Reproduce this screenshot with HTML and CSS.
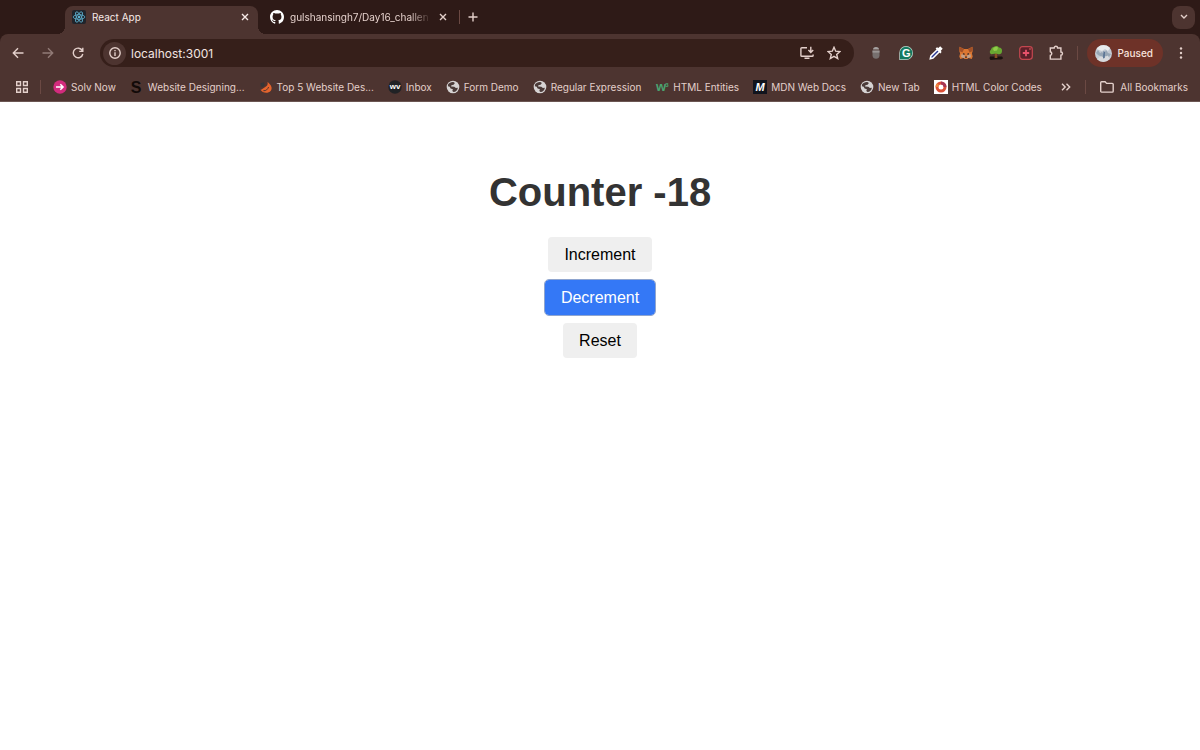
FILE: index.html
```html
<!DOCTYPE html>
<html lang="en">
<head>
  <meta charset="utf-8">
  <title>React App</title>
  <link rel="stylesheet" href="styles.css">
</head>
<body>
  <!-- globe used by bookmarks without a favicon -->
  <svg class="defs" width="0" height="0">
    <symbol id="globe" viewBox="0 0 14 14">
      <circle cx="7" cy="7" r="6.3" fill="#d6d3d3"/>
      <path d="M2 4.600C3.200 2.800 5 1.900 7.400 2.100L8.900 3 7.600 4.700l-2.200.5-.3 1.300 3.200.3 1.600 1.300 2-.4c-.4 2.400-2 4.100-4.400 4.400L6.300 11l.6-1.700L4.600 8.400 3.700 6.800 1.900 6.200z" fill="#4b3b39"/>
    </symbol>
  </svg>

  <header class="browser">
    <div class="tabs">
      <div class="tab active">
        <svg class="favicon" viewBox="0 0 14 14">
          <rect width="14" height="14" rx="2" fill="#20242b"/>
          <g fill="none" stroke="#61b5d4" stroke-width=".8">
            <ellipse cx="7" cy="7" rx="5.800" ry="2.300"/>
            <ellipse cx="7" cy="7" rx="5.800" ry="2.300" transform="rotate(60 7 7)"/>
            <ellipse cx="7" cy="7" rx="5.800" ry="2.300" transform="rotate(120 7 7)"/>
          </g>
          <circle cx="7" cy="7" r="1.200" fill="#61b5d4"/>
        </svg>
        <span class="tab-title">React App</span>
        <button class="close" aria-label="Close tab">
          <svg width="8" height="8" viewBox="0 0 8 8"><path d="M1 1l6 6M7 1L1 7"/></svg>
        </button>
      </div>
      <div class="tab">
        <svg class="favicon" viewBox="0 0 16 16" fill="#fff">
          <path d="M8 0C3.580 0 0 3.580 0 8c0 3.540 2.290 6.530 5.470 7.590.4.070.55-.17.55-.38 0-.19-.01-.82-.01-1.490-2.010.37-2.530-.49-2.690-.94-.09-.23-.48-.94-.82-1.130-.28-.15-.68-.52-.01-.53.63-.01 1.080.58 1.230.82.72 1.210 1.870.87 2.330.66.07-.52.28-.87.51-1.070-1.780-.2-3.640-.89-3.640-3.950 0-.87.31-1.590.82-2.150-.08-.2-.36-1.020.08-2.120 0 0 .67-.21 2.200.82.64-.18 1.320-.27 2-.27s1.360.09 2 .27c1.530-1.040 2.200-.82 2.200-.82.44 1.100.16 1.920.08 2.120.51.56.82 1.270.82 2.150 0 3.070-1.870 3.750-3.650 3.950.29.25.54.73.54 1.480 0 1.070-.01 1.930-.01 2.200 0 .21.15.46.55.38A8.010 8.010 0 0 0 16 8c0-4.420-3.580-8-8-8z"/>
        </svg>
        <span class="tab-title fade">gulshansingh7/Day16_challen</span>
        <button class="close" aria-label="Close tab">
          <svg width="8" height="8" viewBox="0 0 8 8"><path d="M1 1l6 6M7 1L1 7"/></svg>
        </button>
      </div>
      <span class="divider"></span>
      <button class="new-tab" aria-label="New tab">
        <svg width="10" height="10" viewBox="0 0 10 10"><path d="M5 .5v9M.5 5h9"/></svg>
      </button>
      <button class="tab-search" aria-label="Search tabs">
        <svg width="8" height="6" viewBox="0 0 8 6"><path d="M1 1l3 3 3-3"/></svg>
      </button>
    </div>

    <div class="toolbar">
      <div class="nav">
        <button aria-label="Back"><svg width="12" height="12" viewBox="0 0 12 12"><path d="M11.500 6H1.500M6 1.300L1.300 6 6 10.700"/></svg></button>
        <button class="dim" aria-label="Forward" disabled><svg width="12" height="12" viewBox="0 0 12 12"><path d="M.5 6h10M6 1.300L10.700 6 6 10.700"/></svg></button>
        <button aria-label="Reload"><svg width="12" height="12" viewBox="0 0 12 12"><path d="M10.300 3.600A4.800 4.800 0 1 0 10.800 7M10.800.8v3.600H7.200"/></svg></button>
      </div>

      <div class="address">
        <button class="site-info" aria-label="Site information">
          <svg width="12" height="12" viewBox="0 0 12 12"><circle cx="6" cy="6" r="5.200"/><path d="M6 5.300V9M6 3v1.300"/></svg>
        </button>
        <input type="text" aria-label="Address" value="localhost:3001">
        <button aria-label="Install app">
          <svg width="14" height="14" viewBox="0 0 14 14"><path d="M7 1.700H1.800a.9.900 0 0 0-.9.900v6.800c0 .5.400.9.900.9h10.400c.5 0 .9-.4.900-.9V8.400M4.500 12.300h5M10.800.7v5.600M8.400 4l2.400 2.400L13.200 4"/></svg>
        </button>
        <button aria-label="Bookmark this page">
          <svg width="14" height="14" viewBox="0 0 14 14"><path d="M7 1.300l1.700 3.900 4.200.4-3.200 2.800 1 4.100L7 10.300l-3.700 2.200 1-4.100L1.100 5.600l4.200-.4z"/></svg>
        </button>
      </div>

      <div class="extensions">
        <button aria-label="Extension">
          <svg class="ext" viewBox="0 0 16 16">
            <path d="M5 4.600a3 2.600 0 0 1 6 0z" fill="#a7a3a2"/>
            <path d="M4.500 5.600h7v4.600c0 2.300-1.500 3.600-3.500 3.600s-3.500-1.300-3.500-3.600z" fill="#77706f"/>
            <path d="M4.500 5.600h7v2h-7z" fill="#9b9594"/>
          </svg>
        </button>
        <button aria-label="Grammarly">
          <svg class="ext" viewBox="0 0 16 16">
            <path d="M8 1a7 7 0 1 1 0 14H1.300V8A6.800 6.800 0 0 1 8 1z" fill="#bcd8ce"/>
            <path d="M8 1.700a6.300 6.300 0 1 1 0 12.600H2V8a6.200 6.200 0 0 1 6-6.300z" fill="#167a61"/>
            <text class="glyph" x="8.200" y="12" font-size="11" fill="#fff">G</text>
          </svg>
        </button>
        <button aria-label="Color picker">
          <svg class="ext" viewBox="0 0 16 16">
            <path d="M2.300 13.700l.6-2.700 6.800-6.800 2.100 2.100L5 13.100z" fill="#2c3a94" stroke="#fff" stroke-width="1.500"/>
            <path d="M7.600 3.600l1.400-1.300 1.300.8 1.900-1.800 2.500 2.500-1.900 2 .8 1.200-1.300 1.400z" fill="#fff"/>
          </svg>
        </button>
        <button aria-label="MetaMask">
          <svg class="ext" viewBox="0 0 16 16">
            <path d="M1.500 1.800L6 4h4l4.500-2.200.2 4.300-.8 2.500.8 3-1 2.300-3.200-.8-1.200 1H6.700l-1.200-1-3.200.8-1-2.300.8-3-.8-2.500z" fill="#db7732"/>
            <path d="M1.500 1.800L6 4 4.400 7.500 1.300 6.100zM14.500 1.800L10 4l1.600 3.500 3.100-1.400z" fill="#a45127"/>
            <path d="M3.500 9l3 1 .6 2.700-1.600.4-2.400-1zM12.500 9l-3 1-.6 2.700 1.600.4 2.400-1z" fill="#c1a18b"/>
            <path d="M5 8.600l1.600.8M11 8.600l-1.600.8M7 12.200h2" stroke="#40302d" stroke-width="1.300"/>
          </svg>
        </button>
        <button aria-label="Tree extension">
          <svg class="ext" viewBox="0 0 16 16">
            <path d="M2 11.500h12l1.200 1.800-2 1.200H8L2.500 15l-1-1.800z" fill="#1b1310"/>
            <path d="M7 7h2l.4 6H6.600z" fill="#875021"/>
            <path d="M3.300 9.300A2.500 2.500 0 0 1 2.800 5 4 4 0 0 1 6 1.800a3.800 3.800 0 0 1 5 .7A3.300 3.300 0 0 1 14 6c0 2.400-1.700 3.600-3.500 3.200L8 8.500z" fill="#68a832"/>
            <path d="M5 4a3 3 0 0 1 5-1.300L9 5.500 6 6z" fill="#91cb4a"/>
          </svg>
        </button>
        <button aria-label="Extension">
          <svg class="ext" viewBox="0 0 16 16">
            <rect x="1.700" y="1.700" width="12.600" height="12.600" rx="2.700" fill="#5c2029" stroke="#c2474f" stroke-width="1.200"/>
            <path d="M8 4.800v6.400M4.800 8h6.400" stroke="#e8526b" stroke-width="1.800"/>
            <circle cx="12" cy="4" r=".8" fill="#e76b62"/>
          </svg>
        </button>
        <button aria-label="Extensions">
          <svg class="ext line" viewBox="0 0 16 16"><path d="M2.300 3h3.900a1.700 1.700 0 0 1 3.400 0h3.300v4a1.600 1.600 0 0 1 0 3.200v3.900H2.300v-3.700a1.900 1.900 0 0 0 0-3.700z"/></svg>
        </button>
      </div>
      <span class="divider"></span>
      <button class="profile">
        <svg width="17" height="17" viewBox="0 0 17 17">
          <circle cx="8.500" cy="8.500" r="8.500" fill="#c3cad3"/>
          <path d="M1.500 4A8.500 8.500 0 0 1 15 3l-2 3-3-2-3 2-3-1z" fill="#e8eaec"/>
          <path d="M1 8l2-3 2 3 2-1 2 2 2-4 2 3 3 1-2 3-4-1-3 1-4-2z" fill="#97a6b5"/>
          <path d="M2 14.200l4-3 3 1.300 4-2 1.500 3.400a8.500 8.500 0 0 1-12.500.3z" fill="#d8dadd"/>
          <path d="M8.500 6l1.500 1-.3 6-1.700.5z" fill="#546f91"/>
        </svg>
        Paused
      </button>
      <button class="menu" aria-label="Menu">
        <svg width="4" height="14" viewBox="0 0 4 14"><circle cx="2" cy="2.500" r="1.200"/><circle cx="2" cy="7" r="1.200"/><circle cx="2" cy="11.500" r="1.200"/></svg>
      </button>
    </div>

    <nav class="bookmarks">
      <button class="apps" aria-label="Apps">
        <svg width="12" height="12" viewBox="0 0 12 12"><path d="M.7.700h3.800v3.800H.7zM7.500.7h3.800v3.800H7.500zM.7 7.500h3.800v3.800H.7zM7.500 7.500h3.800v3.800H7.500z"/></svg>
      </button>
      <span class="divider"></span>
      <div class="bookmark-list">
        <a href="#"><svg class="favicon" viewBox="0 0 14 14"><circle cx="7" cy="7" r="6.700" fill="#d22b7d"/><path d="M3 7h7M7.300 4.200L10.100 7l-2.800 2.800" fill="none" stroke="#fff" stroke-width="1.500"/></svg>Solv Now</a>
        <a href="#"><svg class="favicon" viewBox="0 0 14 14"><text class="glyph" x="6" y="12.500" font-size="16" fill="#120a08">S</text></svg>Website Designing...</a>
        <a href="#"><svg class="favicon" viewBox="0 0 14 14"><path d="M8.500 2c.7 2.700-.4 4-2.600 5.300C4.300 8.400 3 9.500 1.500 9.800c2 3.600 7.700 4.100 10.300 1 2-2.900.4-5.800-3.300-8.800z" fill="#e4642d"/><path d="M1.500 3.300l3.500-1 .6 2.700-1.500 2-2.200-.4z" fill="#343638"/><path d="M4.400 10.700c2.700.3 4.200-1.300 5.200-3.700" fill="none" stroke="#4d3430"/></svg>Top 5 Website Des...</a>
        <a href="#"><svg class="favicon" viewBox="0 0 14 14"><circle cx="7" cy="7" r="6.700" fill="#202225"/><text class="glyph" x="7" y="9.400" font-size="8" fill="#fff">wv</text></svg>Inbox</a>
        <a href="#"><svg class="favicon"><use href="#globe"/></svg>Form Demo</a>
        <a href="#"><svg class="favicon"><use href="#globe"/></svg>Regular Expression</a>
        <a href="#"><svg class="favicon" viewBox="0 0 14 14"><text class="glyph" x="6" y="11" font-size="13" fill="#4aa470">w</text><text class="glyph" x="12" y="7" font-size="6" fill="#4aa470">3</text></svg>HTML Entities</a>
        <a href="#"><svg class="favicon" viewBox="0 0 14 14"><rect width="14" height="14" fill="#11141d"/><text class="glyph" x="7" y="11" font-size="11" font-style="italic" fill="#fff">M</text></svg>MDN Web Docs</a>
        <a href="#"><svg class="favicon"><use href="#globe"/></svg>New Tab</a>
        <a href="#"><svg class="favicon" viewBox="0 0 14 14"><rect width="14" height="14" fill="#fff"/><circle cx="7" cy="7" r="4" fill="none" stroke="#dc5037" stroke-width="3"/><path d="M7 3a4 4 0 0 1 4 4" fill="none" stroke="#a73755" stroke-width="3"/><path d="M3 7a4 4 0 0 1 1.200-2.800" fill="none" stroke="#ee8740" stroke-width="3"/></svg>HTML Color Codes</a>
      </div>
      <button class="more" aria-label="More bookmarks">
        <svg width="10" height="8" viewBox="0 0 10 8"><path d="M1 .8L4.200 4 1 7.200M5.500.8L8.700 4 5.500 7.200"/></svg>
      </button>
      <span class="divider"></span>
      <a href="#" class="all"><svg width="14" height="12" viewBox="0 0 14 12"><path d="M.7 10.200V1.700c0-.5.400-.9.900-.9h3.500l1.500 1.600h5.600c.6 0 1 .4 1 .9v6.900c0 .5-.4.900-.9.900H1.600a.9.900 0 0 1-.9-.9z"/></svg>All Bookmarks</a>
    </nav>
  </header>

  <main class="counter">
    <h1>Counter <span id="count">-18</span></h1>
    <button onclick="setCount(count + 1)">Increment</button>
    <button class="pressed" onclick="setCount(count - 1)">Decrement</button>
    <button onclick="setCount(0)">Reset</button>
  </main>

  <script>
    let count = -18;

    function setCount(value) {
      count = value;
      document.getElementById("count").textContent = count;
    }
  </script>
</body>
</html>
```

FILE: styles.css
```css
* {
  box-sizing: border-box;
}
body {
  margin: 0;
  background-color: #fff;
  font-family: "Liberation Sans", Arial, sans-serif;
}
.defs {
  position: absolute;
}

/* browser frame */
.browser {
  background-color: #2e1a17;
  color: #e4d0cb;
  font-family: Inter, sans-serif;
  font-size: 10px;
}
.browser button {
  display: flex;
  align-items: center;
  justify-content: center;
  flex-shrink: 0;
  padding: 0;
  border: none;
  background: none;
  color: inherit;
  font: inherit;
}
.browser a {
  display: flex;
  align-items: center;
  color: inherit;
  text-decoration: none;
  white-space: nowrap;
}
.browser button svg,
.all svg {
  fill: none;
  stroke: currentColor;
  stroke-width: 1.4;
}
.browser button .ext {
  width: 16px;
  height: 16px;
  stroke: none;
}
.browser button .ext.line {
  stroke: currentColor;
}
.favicon {
  width: 14px;
  height: 14px;
  flex-shrink: 0;
}
.glyph {
  font-family: "Liberation Sans", Arial, sans-serif;
  font-weight: bold;
  text-anchor: middle;
}
.divider {
  width: 1px;
  height: 14px;
  flex-shrink: 0;
  background-color: #6b4943;
}

/* tabs */
.tabs {
  display: flex;
  align-items: center;
  height: 34px;
  padding: 0 5px 0 65px;
}
.tab {
  display: flex;
  align-items: center;
  gap: 6px;
  width: 198px;
  height: 28px;
  margin-top: 6px;
  padding: 0 7px 6px 12px;
}
.tab.active {
  position: relative;
  width: 193px;
  padding-left: 7px;
  border-radius: 8px 8px 0 0;
  background-color: #4d3430;
  color: #f7eae7;
}
.tab.active::before,
.tab.active::after {
  content: "";
  position: absolute;
  bottom: 0;
  width: 8px;
  height: 8px;
}
.tab.active::before {
  right: 100%;
  background: radial-gradient(circle at 0 0, transparent 8px, #4d3430 8px);
}
.tab.active::after {
  left: 100%;
  background: radial-gradient(circle at 100% 0, transparent 8px, #4d3430 8px);
}
.tab-title {
  flex: 1;
  white-space: nowrap;
}
.fade {
  mask-image: linear-gradient(to right, #000 85%, transparent);
}
.close {
  width: 12px;
  height: 12px;
}
.tabs .divider {
  margin-left: 3px;
}
.new-tab {
  width: 26px;
  height: 26px;
}
.tabs .tab-search {
  width: 23px;
  height: 23px;
  margin-left: auto;
  border-radius: 8px;
  background-color: #4d3430;
}

/* toolbar */
.toolbar {
  display: flex;
  align-items: center;
  height: 38px;
  padding: 0 17px 0 12px;
  border-radius: 8px 8px 0 0;
  background-color: #4d3430;
}
.nav {
  display: flex;
  gap: 18px;
  margin-right: 16px;
}
.dim {
  opacity: 0.45;
}
.address {
  display: flex;
  align-items: center;
  flex: 1;
  gap: 13px;
  height: 28px;
  padding: 0 13px 0 3px;
  border-radius: 14px;
  background-color: #361f1a;
}
.address input {
  flex: 1;
  min-width: 0;
  margin-left: -8px;
  padding: 0;
  border: none;
  outline: none;
  background: none;
  color: #f2e4e0;
  font: 12px Inter, sans-serif;
}
.address .site-info {
  width: 23px;
  height: 23px;
  border-radius: 50%;
  background-color: #4d3430;
}
.extensions {
  display: flex;
  gap: 14px;
  margin: 0 13px 0 14px;
}
.browser .profile {
  gap: 5px;
  height: 28px;
  margin: 0 16px 0 9px;
  padding: 0 10px 0 8px;
  border-radius: 14px;
  background-color: #6e3228;
  color: #f9e2dd;
  font-weight: 500;
}
.browser .profile svg {
  stroke: none;
}
.browser .menu svg {
  fill: currentColor;
  stroke: none;
}

/* bookmarks bar */
.bookmarks {
  display: flex;
  align-items: center;
  height: 30px;
  padding: 0 12px 0 16px;
  border-bottom: 1px solid #6b5652;
  background-color: #4d3430;
}
.apps {
  margin-right: 12px;
}
.bookmark-list {
  display: flex;
  flex: 1;
  gap: 14px;
  min-width: 0;
  margin-left: 12px;
}
.bookmark-list a {
  gap: 4px;
}
.more {
  margin-right: 14px;
}
.bookmarks .all {
  gap: 6px;
  margin-left: 14px;
}

/* counter */
.counter {
  display: flex;
  flex-direction: column;
  align-items: center;
  gap: 8px;
  padding: 67px 20px 20px;
}
.counter h1 {
  margin: 0 0 14px;
  color: #333;
  font-size: 40px;
  line-height: 46px;
}
.counter button {
  height: 35px;
  padding: 0 16px;
  border: none;
  border-radius: 4px;
  background-color: #efefef;
  color: #000;
  font: 16px "Liberation Sans", Arial, sans-serif;
  cursor: pointer;
}
.counter .pressed {
  background-color: #3478f6;
  color: #fff;
  outline: 1px solid #8fa5cf;
}
```
